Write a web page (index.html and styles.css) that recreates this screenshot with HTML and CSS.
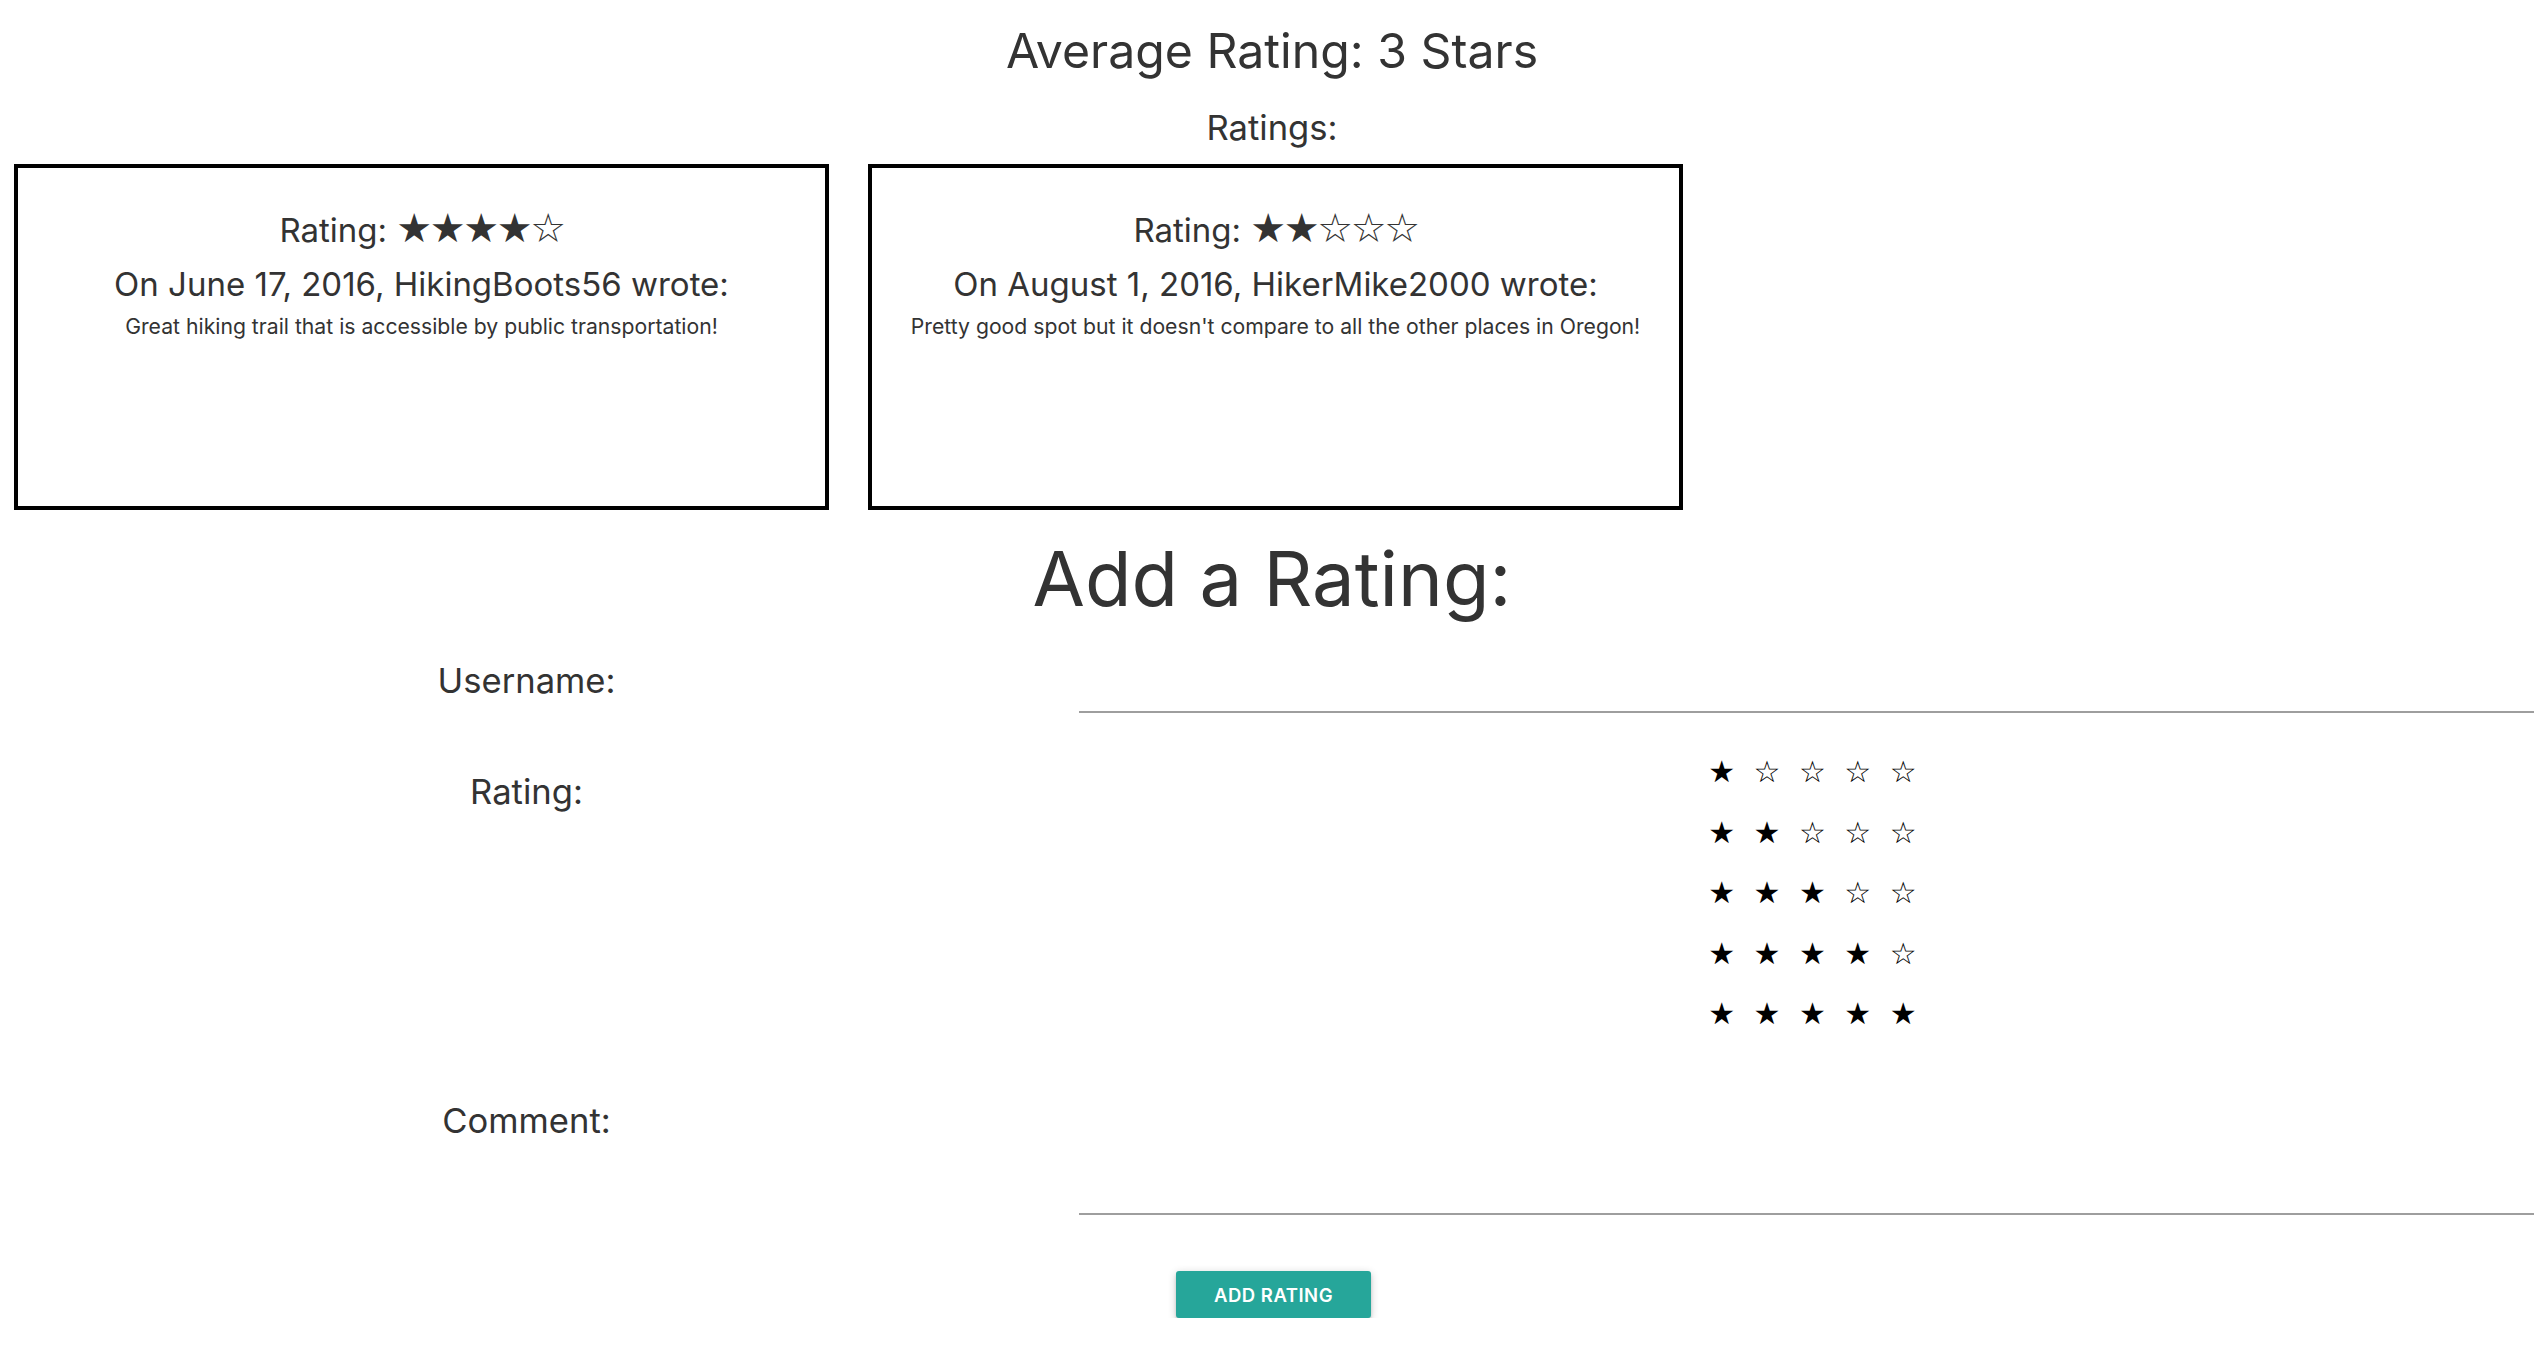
FILE: index.html
```html
<!DOCTYPE html>
<html lang="en">
<head>
<meta charset="utf-8">
<title>Ratings</title>
<link rel="stylesheet" href="styles.css">
</head>
<body>
<h1 class="avg">Average Rating: 3 Stars</h1>
<h2 class="ratings-head">Ratings:</h2>
<div class="cards">
  <div class="card">
    <p class="card-rating">Rating: <span class="card-stars">★★★★☆</span></p>
    <p class="card-author">On June 17, 2016, HikingBoots56 wrote:</p>
    <p class="card-comment">Great hiking trail that is accessible by public transportation!</p>
  </div>
  <div class="card">
    <p class="card-rating">Rating: <span class="card-stars">★★☆☆☆</span></p>
    <p class="card-author">On August 1, 2016, HikerMike2000 wrote:</p>
    <p class="card-comment">Pretty good spot but it doesn't compare to all the other places in Oregon!</p>
  </div>
</div>
<h2 class="add-head">Add a Rating:</h2>
<form class="form">
  <label class="label label-user" for="username">Username:</label>
  <input class="field field-user" id="username" type="text">
  <span class="label label-rating">Rating:</span>
  <div class="star-options">
    <div class="star-row">★☆☆☆☆</div>
    <div class="star-row">★★☆☆☆</div>
    <div class="star-row">★★★☆☆</div>
    <div class="star-row">★★★★☆</div>
    <div class="star-row">★★★★★</div>
  </div>
  <label class="label label-comment" for="comment">Comment:</label>
  <textarea class="field field-comment" id="comment"></textarea>
</form>
<div class="actions"><button class="btn" type="button">ADD RATING</button></div>
</body>
</html>
```
FILE: styles.css
```css
* { box-sizing: border-box; }
html, body { margin: 0; padding: 0; background: #fff; }
body { font-family: Inter, "Open Sans", sans-serif; color: #333; }

.avg { margin: 23px 0 0; font-size: 48.2px; line-height: 56px; font-weight: 400; text-align: center; }
.ratings-head { margin: 27.5px 0 0; font-size: 34.6px; line-height: 40px; font-weight: 400; text-align: center; }

.cards { display: flex; gap: 39px; margin-top: 17.5px; padding-left: 14px; }
.card { width: 815px; height: 346px; border: 4px solid #000; padding-top: 42px; text-align: center; }
.card p { margin: 0; }
.card-rating { font-size: 33px; line-height: 40px; }
.card-stars { font-family: "DejaVu Sans", sans-serif; font-size: 40px; line-height: 0; letter-spacing: -2.4px; }
.card .card-author { font-size: 33px; line-height: 40px; margin-top: 13.7px; }
.card .card-comment { font-size: 21.2px; line-height: 28px; margin-top: 8px; }

.add-head { margin: 24.4px 0 0; font-size: 76px; line-height: 88px; font-weight: 400; text-align: center; }

.form { display: grid; grid-template-columns: 1053px 1455px; column-gap: 26px; align-items: start; margin-top: 1.1px; }
.label { display: block; text-align: center; font-size: 34.6px; line-height: 40px; }
.label-user { margin-top: 36.5px; }
.label-rating { margin-top: 57.5px; }
.label-comment { margin-top: 55px; }

.field { display: block; width: 100%; margin: 0; padding: 0; border: none; border-bottom: 2px solid #9e9e9e; background: transparent; outline: none; font: inherit; resize: none; overflow: hidden; }
.field-user { height: 90px; }
.field-comment { height: 170.5px; }

.star-options { margin-top: 29px; padding-left: 629.2px; font-family: "DejaVu Sans", sans-serif; font-size: 30px; line-height: 60.5px; letter-spacing: 18.5px; color: #000; white-space: nowrap; }

.actions { display: flex; justify-content: center; margin-top: 56px; }
.btn { margin-left: 3px; width: 195px; height: 47px; padding: 0; background: #26a69a; color: #fff; border: none; border-radius: 3px; font-family: Inter, sans-serif; font-weight: 600; font-size: 18.5px; letter-spacing: 0.5px; box-shadow: 0 3px 3px 0 rgba(0,0,0,.14), 0 5px 2px -3px rgba(0,0,0,.12), 0 2px 8px 0 rgba(0,0,0,.2); cursor: pointer; }
```
